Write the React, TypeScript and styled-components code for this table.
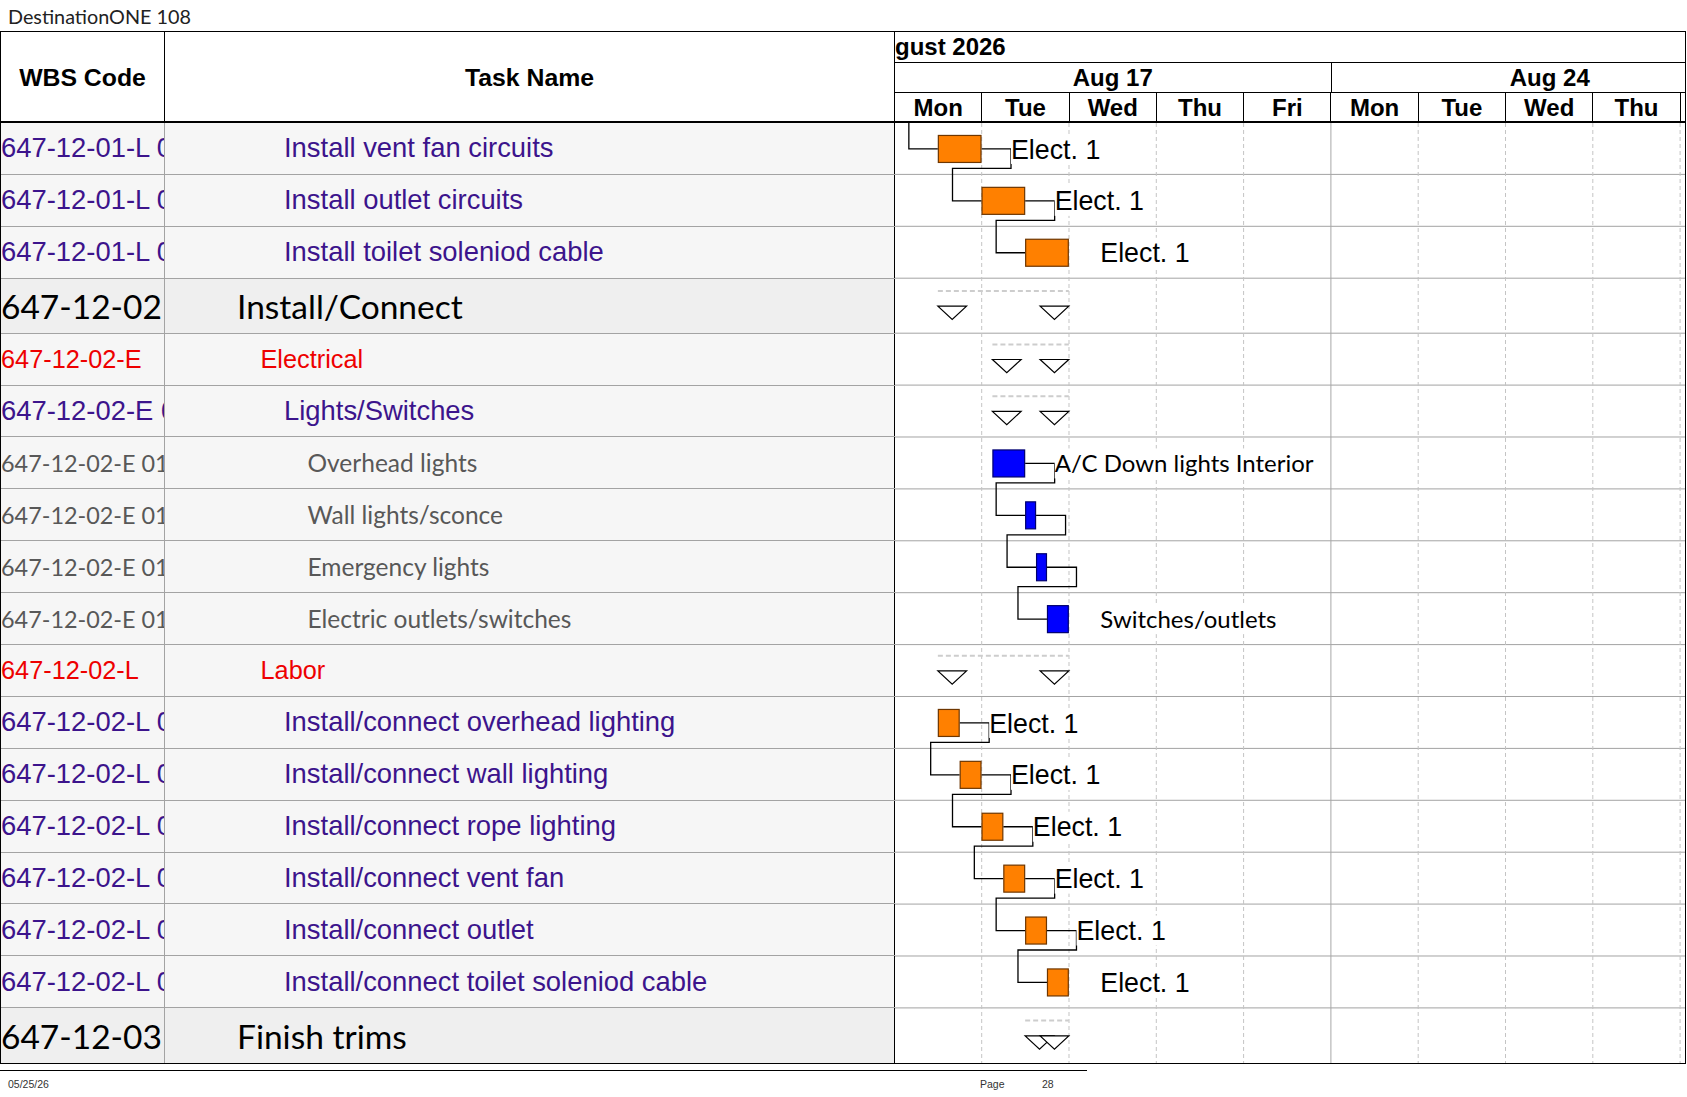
import React from 'react';
import styled, { createGlobalStyle } from 'styled-components';

const ARIAL = '"Liberation Sans", Arial, sans-serif';
const CALIBRI = 'Lato, "Open Sans", sans-serif';

const DAY = 87.3;
const GANTT_W = 790;
const ROW_H = 51.9;
const SUM_H = 55;

type Kind = 'summary' | 'group' | 'task' | 'detail';

interface Bar {
  s: number;
  e: number;
  c: 'orange' | 'blue';
  label?: string;
  cal?: boolean;
}

interface RowDef {
  wbs: string;
  name: string;
  kind: Kind;
  indent: number;
  bar?: Bar;
  span?: { s: number; e: number };
}

const rows: RowDef[] = [
  { wbs: '647-12-01-L 01', name: 'Install vent fan circuits', kind: 'task', indent: 3, bar: { s: 0.5, e: 1.0, c: 'orange', label: 'Elect. 1' } },
  { wbs: '647-12-01-L 02', name: 'Install outlet circuits', kind: 'task', indent: 3, bar: { s: 1.0, e: 1.5, c: 'orange', label: 'Elect. 1' } },
  { wbs: '647-12-01-L 03', name: 'Install toilet soleniod cable', kind: 'task', indent: 3, bar: { s: 1.5, e: 2.0, c: 'orange', label: 'Elect. 1' } },
  { wbs: '647-12-02', name: 'Install/Connect', kind: 'summary', indent: 1, span: { s: 0.5, e: 2.0 } },
  { wbs: '647-12-02-E', name: 'Electrical', kind: 'group', indent: 2, span: { s: 1.125, e: 2.0 } },
  { wbs: '647-12-02-E 01', name: 'Lights/Switches', kind: 'task', indent: 3, span: { s: 1.125, e: 2.0 } },
  { wbs: '647-12-02-E 01.01', name: 'Overhead lights', kind: 'detail', indent: 4, bar: { s: 1.125, e: 1.5, c: 'blue', label: 'A/C Down lights Interior', cal: true } },
  { wbs: '647-12-02-E 01.02', name: 'Wall lights/sconce', kind: 'detail', indent: 4, bar: { s: 1.5, e: 1.625, c: 'blue' } },
  { wbs: '647-12-02-E 01.03', name: 'Emergency lights', kind: 'detail', indent: 4, bar: { s: 1.625, e: 1.75, c: 'blue' } },
  { wbs: '647-12-02-E 01.04', name: 'Electric outlets/switches', kind: 'detail', indent: 4, bar: { s: 1.75, e: 2.0, c: 'blue', label: 'Switches/outlets', cal: true } },
  { wbs: '647-12-02-L', name: 'Labor', kind: 'group', indent: 2, span: { s: 0.5, e: 2.0 } },
  { wbs: '647-12-02-L 01', name: 'Install/connect overhead lighting', kind: 'task', indent: 3, bar: { s: 0.5, e: 0.75, c: 'orange', label: 'Elect. 1' } },
  { wbs: '647-12-02-L 02', name: 'Install/connect wall lighting', kind: 'task', indent: 3, bar: { s: 0.75, e: 1.0, c: 'orange', label: 'Elect. 1' } },
  { wbs: '647-12-02-L 03', name: 'Install/connect rope lighting', kind: 'task', indent: 3, bar: { s: 1.0, e: 1.25, c: 'orange', label: 'Elect. 1' } },
  { wbs: '647-12-02-L 04', name: 'Install/connect vent fan', kind: 'task', indent: 3, bar: { s: 1.25, e: 1.5, c: 'orange', label: 'Elect. 1' } },
  { wbs: '647-12-02-L 05', name: 'Install/connect outlet', kind: 'task', indent: 3, bar: { s: 1.5, e: 1.75, c: 'orange', label: 'Elect. 1' } },
  { wbs: '647-12-02-L 06', name: 'Install/connect toilet soleniod cable', kind: 'task', indent: 3, bar: { s: 1.75, e: 2.0, c: 'orange', label: 'Elect. 1' } },
  { wbs: '647-12-03', name: 'Finish trims', kind: 'summary', indent: 1, span: { s: 1.5, e: 2.0 } },
];

// chains of linked tasks; the first one comes in from a predecessor above the page
const chains: { ids: number[]; fromAbove: boolean }[] = [
  { ids: [0, 1, 2], fromAbove: true },
  { ids: [6, 7, 8, 9], fromAbove: false },
  { ids: [11, 12, 13, 14, 15, 16], fromAbove: false },
];

const days = ['Mon', 'Tue', 'Wed', 'Thu', 'Fri', 'Mon', 'Tue', 'Wed', 'Thu'];

const rowHeight = (r: RowDef) => (r.kind === 'summary' ? SUM_H : ROW_H);
const tops: number[] = [];
rows.reduce((acc, r) => {
  tops.push(acc);
  return acc + rowHeight(r);
}, 0);
const BODY_H = rows.reduce((a, r) => a + rowHeight(r), 0);

const tx = (t: number) => t * DAY - 0.8;

const palette = {
  orange: { fill: '#ff8000', stroke: '#6e3600' },
  blue: { fill: '#0000ff', stroke: '#00006e' },
};

const labelWidth = (b: Bar) => {
  if (!b.label) return 0;
  if (b.label === 'Elect. 1') return 92;
  if (b.label === 'Switches/outlets') return 172;
  return 266;
};

const GlobalStyle = createGlobalStyle`
  html, body {
    margin: 0;
    padding: 0;
    background: #ffffff;
  }
  body {
    font-family: ${ARIAL};
    color: #000;
  }
`;

const Page = styled.div`
  width: 1687px;
  height: 1097px;
  background: #fff;
  overflow: hidden;
`;

const TitleBar = styled.div`
  height: 31px;
  display: flex;
  align-items: center;
  padding-left: 8px;
  font-family: ${CALIBRI};
  font-size: 19.8px;
  color: #222;
`;

const Sheet = styled.div`
  width: 1686px;
  box-sizing: border-box;
  border: 1px solid #000;
`;

const HeaderRow = styled.div`
  display: flex;
  height: 91px;
  box-sizing: border-box;
  border-bottom: 2px solid #000;
`;

const HeadCell = styled.div<{ $w: number }>`
  width: ${(p) => p.$w}px;
  flex-shrink: 0;
  box-sizing: border-box;
  border-right: 1px solid #000;
  display: flex;
  align-items: center;
  justify-content: center;
  font-family: ${ARIAL};
  font-weight: 700;
  font-size: 24.8px;
  padding-top: 2px;
`;

const Timescale = styled.div`
  width: ${GANTT_W}px;
  display: flex;
  flex-direction: column;
  overflow: hidden;
`;

const ScaleRow = styled.div<{ $h: number; $line?: boolean }>`
  height: ${(p) => p.$h}px;
  display: flex;
  box-sizing: border-box;
  border-bottom: ${(p) => (p.$line ? '1px solid #000' : 'none')};
  font-family: ${ARIAL};
  font-weight: 700;
  font-size: 24px;
  line-height: 1;
  overflow: hidden;
`;

const MonthLabel = styled.div`
  display: flex;
  align-items: center;
`;

const ScaleCell = styled.div<{ $w: number; $edge?: boolean }>`
  width: ${(p) => p.$w}px;
  flex-shrink: 0;
  box-sizing: border-box;
  border-right: ${(p) => (p.$edge ? '1px solid #000' : 'none')};
  display: flex;
  align-items: center;
  justify-content: center;
  padding-top: 1px;
`;

const Body = styled.div`
  display: flex;
`;

const Grid = styled.div`
  width: 894px;
  flex-shrink: 0;
  display: flex;
  flex-direction: column;
`;

const GridRow = styled.div<{ $h: number; $sum: boolean; $last: boolean }>`
  height: ${(p) => p.$h}px;
  display: flex;
  box-sizing: border-box;
  background: ${(p) => (p.$sum ? '#efefef' : '#f6f6f6')};
  border-bottom: ${(p) => (p.$last ? 'none' : '1px solid #a3a3a3')};
`;

const kindFont = (k: Kind, detailSize = 24.5) => {
  switch (k) {
    case 'summary':
      return `font-family: ${CALIBRI}; font-size: 33.5px; color: #000;`;
    case 'group':
      return `font-family: ${ARIAL}; font-size: 25.3px; color: #ee0000;`;
    case 'detail':
      return `font-family: ${CALIBRI}; font-size: ${detailSize}px; color: #585858;`;
    default:
      return `font-family: ${ARIAL}; font-size: 27.4px; color: #3c148c;`;
  }
};

const WbsCell = styled.div<{ $kind: Kind }>`
  width: 164px;
  flex-shrink: 0;
  box-sizing: border-box;
  border-right: 1px solid #a3a3a3;
  display: flex;
  align-items: center;
  overflow: hidden;
  white-space: nowrap;
  ${(p) => kindFont(p.$kind, 23.4)}
`;

const NameCell = styled.div<{ $kind: Kind; $indent: number }>`
  width: 730px;
  flex-shrink: 0;
  box-sizing: border-box;
  border-right: 1px solid #000;
  display: flex;
  align-items: center;
  padding-left: ${(p) => 48.5 + p.$indent * 23.5}px;
  white-space: nowrap;
  overflow: hidden;
  ${(p) => kindFont(p.$kind)}
`;

const GanttCanvas = styled.svg`
  display: block;
  flex-shrink: 0;
  background: #fff;
`;

const Footer = styled.div`
  margin-top: 6px;
  width: 1087px;
  border-top: 1px solid #000;
  display: flex;
  align-items: center;
  height: 26px;
  font-family: ${ARIAL};
  font-size: 10.5px;
  color: #333;
`;

const FootText = styled.span<{ $w: number; $pad?: number }>`
  width: ${(p) => p.$w}px;
  padding-left: ${(p) => p.$pad ?? 0}px;
  box-sizing: border-box;
  flex-shrink: 0;
`;

const GanttBody: React.FC = () => {
  const cy = (i: number) => tops[i] + rowHeight(rows[i]) / 2;
  const bottom = (i: number) => tops[i] + rowHeight(rows[i]);

  const connectors: string[] = [];
  chains.forEach((ch) => {
    ch.ids.forEach((id, k) => {
      const bar = rows[id].bar!;
      if (k === 0 && ch.fromAbove) {
        const x = tx(bar.s) - 29;
        connectors.push(`M${x},0 V${cy(id)} H${tx(bar.s)}`);
      }
      const next = ch.ids[k + 1];
      if (next === undefined) return;
      const nb = rows[next].bar!;
      const cornerX = tx(bar.e) + 29.5;
      const turnY = bottom(id) - 6.5;
      const inX = tx(nb.s) - 29;
      connectors.push(
        `M${tx(bar.e)},${cy(id)} H${cornerX} V${turnY} H${inX} V${cy(next)} H${tx(nb.s)}`
      );
    });
  });

  const linked = new Set<number>();
  chains.forEach((ch) => ch.ids.slice(0, -1).forEach((id) => linked.add(id)));

  return (
    <GanttCanvas width={GANTT_W} height={BODY_H} viewBox={`0 0 ${GANTT_W} ${BODY_H}`}>
      {rows.slice(0, -1).map((r, i) => (
        <line key={`h${i}`} x1={0} x2={GANTT_W} y1={bottom(i) - 0.5} y2={bottom(i) - 0.5} stroke="#a3a3a3" strokeWidth={1} />
      ))}
      {Array.from({ length: 9 }, (_, k) => k + 1).map((k) => (
        <line
          key={`v${k}`}
          x1={k * DAY - 0.6}
          x2={k * DAY - 0.6}
          y1={0}
          y2={BODY_H}
          stroke={k === 5 ? '#a8a8a8' : '#c4c4c4'}
          strokeWidth={1}
          strokeDasharray={k === 5 ? undefined : '4 3'}
        />
      ))}

      {rows.map((r, i) => {
        if (!r.span) return null;
        const sum = r.kind === 'summary';
        const lineY = tops[i] + (sum ? 12.2 : 10.7);
        const triTop = tops[i] + (sum ? 27.5 : 25.8);
        const x1 = tx(r.span.s);
        const x2 = tx(r.span.e);
        const tri = (x: number) => `${x},${triTop} ${x + 28.7},${triTop} ${x + 14.35},${triTop + 13.3}`;
        return (
          <g key={`s${i}`}>
            <line x1={x1} x2={x2} y1={lineY} y2={lineY} stroke="#cdcdcd" strokeWidth={2} strokeDasharray="5 3" />
            <polygon points={tri(x1)} fill="#fff" stroke="#000" strokeWidth={1.2} />
            <polygon points={tri(x2 - 28.7)} fill="#fff" stroke="#000" strokeWidth={1.2} />
          </g>
        );
      })}

      {connectors.map((d, i) => (
        <path key={`c${i}`} d={d} fill="none" stroke="#000" strokeWidth={1.3} />
      ))}

      {rows.map((r, i) => {
        const b = r.bar;
        if (!b) return null;
        const x = tx(b.s);
        const w = tx(b.e) - x;
        const y = cy(i) - 14;
        const col = palette[b.c];
        const lx = tx(b.e) + (linked.has(i) ? 29.5 : 31.5);
        const fs = b.cal ? 24 : 26.8;
        return (
          <g key={`b${i}`}>
            <rect x={x + 0.5} y={y + 0.5} width={w - 1} height={27} fill={col.fill} stroke={col.stroke} strokeWidth={1.2} />
            {b.label && (
              <>
                <rect x={lx} y={cy(i) - 15} width={labelWidth(b)} height={30} fill="#fff" />
                <text
                  x={lx}
                  y={cy(i) + fs * 0.36}
                  fontFamily={b.cal ? CALIBRI : ARIAL}
                  fontSize={fs}
                  fill="#000"
                >
                  {b.label}
                </text>
              </>
            )}
          </g>
        );
      })}
    </GanttCanvas>
  );
};

const App: React.FC = () => {
  return (
    <Page>
      <GlobalStyle />
      <TitleBar>DestinationONE 108</TitleBar>
      <Sheet>
        <HeaderRow>
          <HeadCell $w={164}>WBS Code</HeadCell>
          <HeadCell $w={730}>Task Name</HeadCell>
          <Timescale>
            <ScaleRow $h={31} $line>
              <MonthLabel>gust 2026</MonthLabel>
            </ScaleRow>
            <ScaleRow $h={30} $line>
              <ScaleCell $w={DAY * 5} $edge>Aug 17</ScaleCell>
              <ScaleCell $w={DAY * 5}>Aug 24</ScaleCell>
            </ScaleRow>
            <ScaleRow $h={28}>
              {days.map((d, i) => (
                <ScaleCell key={i} $w={DAY} $edge>
                  {d}
                </ScaleCell>
              ))}
            </ScaleRow>
          </Timescale>
        </HeaderRow>
        <Body>
          <Grid>
            {rows.map((r, i) => (
              <GridRow key={i} $h={rowHeight(r)} $sum={r.kind === 'summary'} $last={i === rows.length - 1}>
                <WbsCell $kind={r.kind}>{r.wbs}</WbsCell>
                <NameCell $kind={r.kind} $indent={r.indent}>
                  {r.name}
                </NameCell>
              </GridRow>
            ))}
          </Grid>
          <GanttBody />
        </Body>
      </Sheet>
      <Footer>
        <FootText $w={980} $pad={8}>05/25/26</FootText>
        <FootText $w={62}>Page</FootText>
        <FootText $w={40}>28</FootText>
      </Footer>
    </Page>
  );
};

export default App;
